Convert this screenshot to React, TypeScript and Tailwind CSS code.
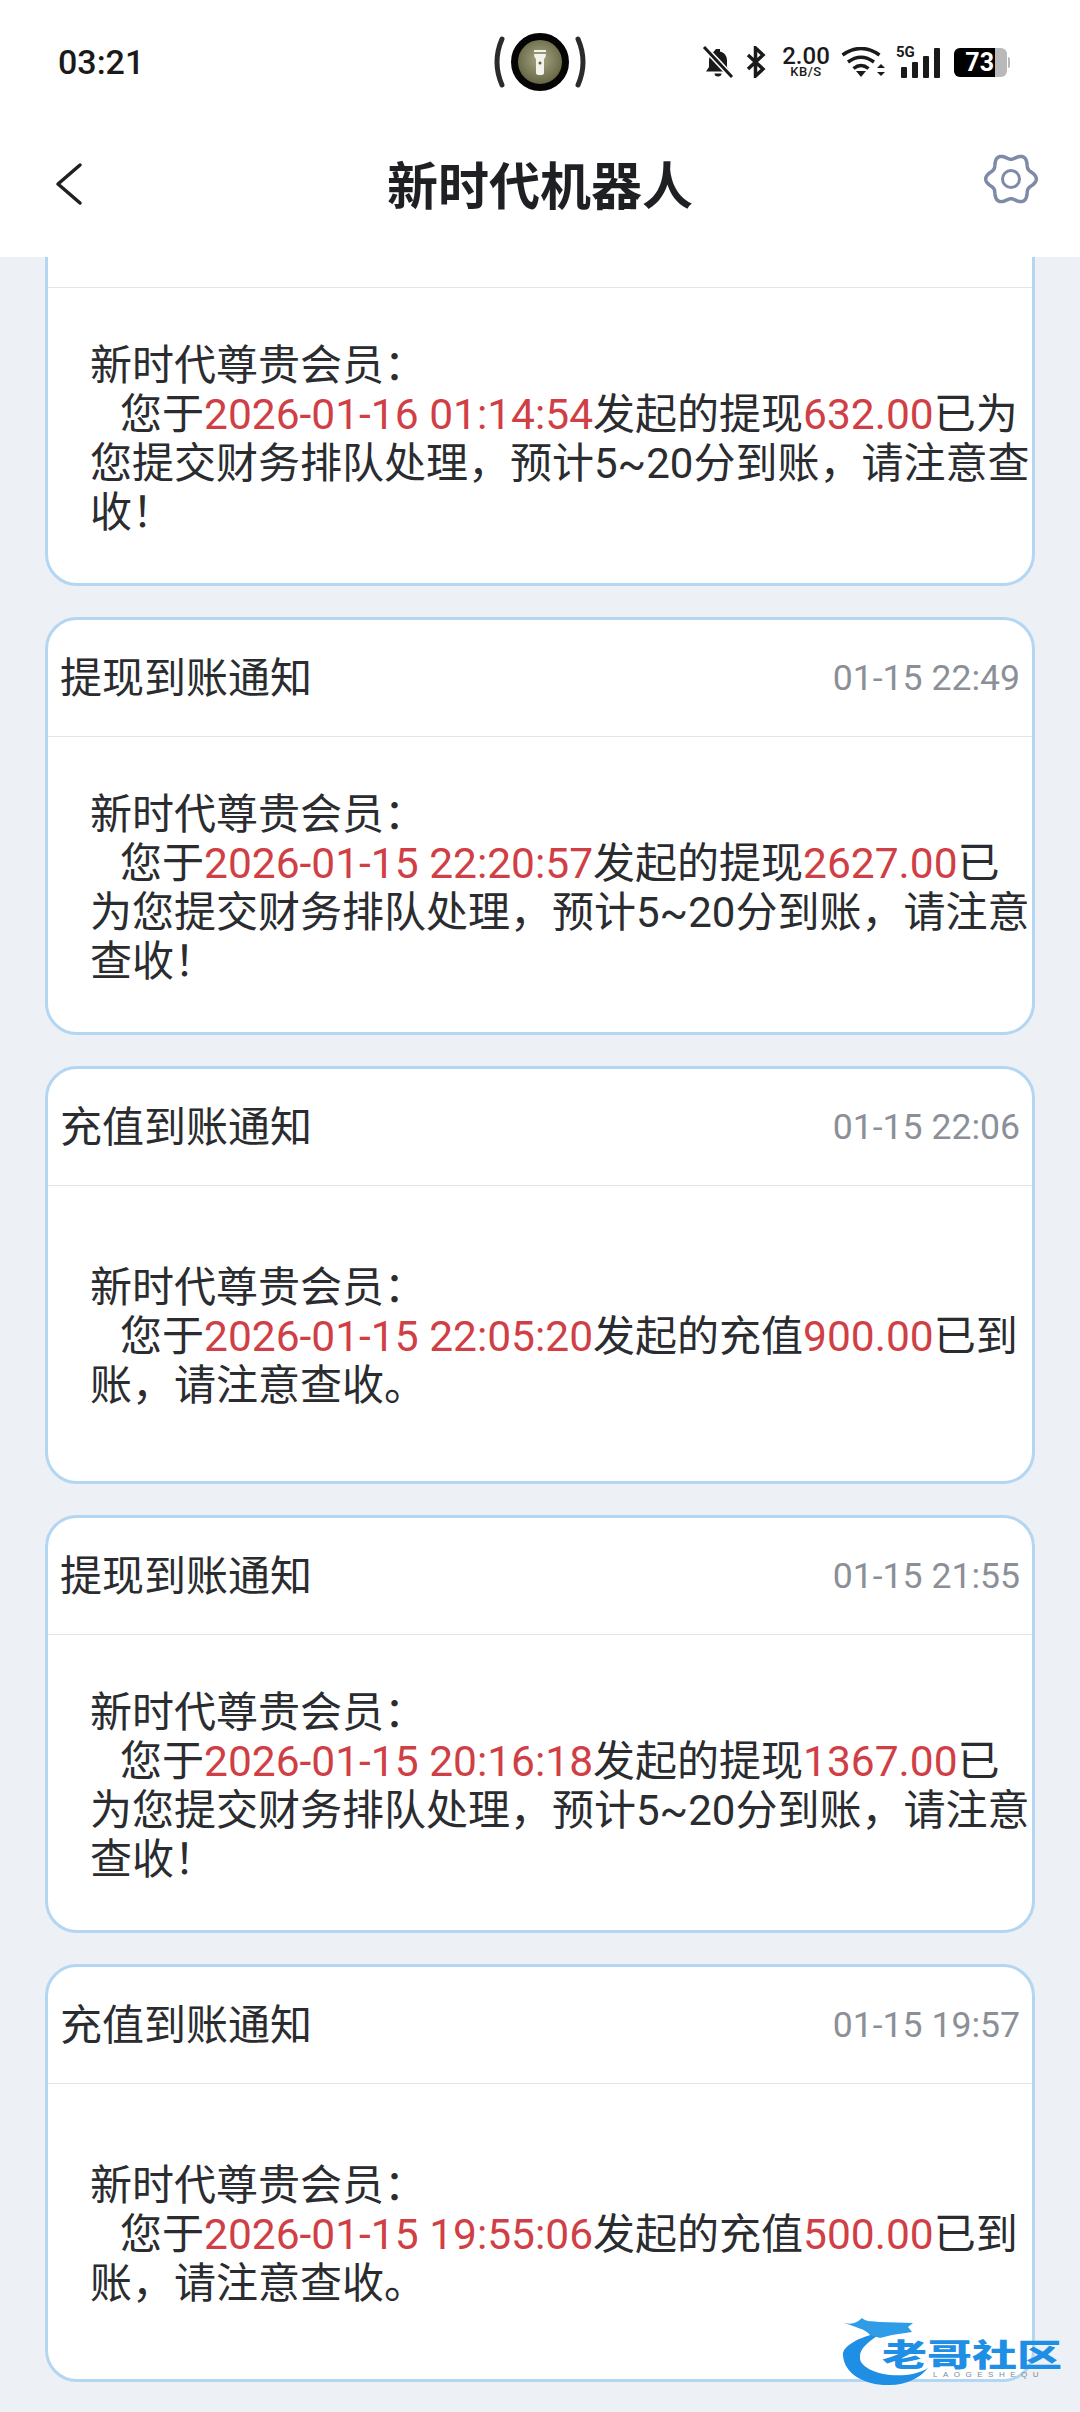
import { ReactNode } from 'react'

const cjk = { fontFamily: 'Roboto, "Noto Sans CJK SC", sans-serif' }

const Red = ({ children }: { children: ReactNode }) => (
  <span className="text-[42.5px] text-[#cf3f45]">{children}</span>
)

type Msg = {
  title: string
  time: string
  at: string
  pre: string
  amount: string
  post: string
}

const messages: Msg[] = [
  // first card is scrolled under the header, its title row can't be seen
  { title: '', time: '', at: '2026-01-16 01:14:54', pre: '发起的提现', amount: '632.00', post: '已为您提交财务排队处理，预计5~20分到账，请注意查收！' },
  { title: '提现到账通知', time: '01-15 22:49', at: '2026-01-15 22:20:57', pre: '发起的提现', amount: '2627.00', post: '已为您提交财务排队处理，预计5~20分到账，请注意查收！' },
  { title: '充值到账通知', time: '01-15 22:06', at: '2026-01-15 22:05:20', pre: '发起的充值', amount: '900.00', post: '已到账，请注意查收。' },
  { title: '提现到账通知', time: '01-15 21:55', at: '2026-01-15 20:16:18', pre: '发起的提现', amount: '1367.00', post: '已为您提交财务排队处理，预计5~20分到账，请注意查收！' },
  { title: '充值到账通知', time: '01-15 19:57', at: '2026-01-15 19:55:06', pre: '发起的充值', amount: '500.00', post: '已到账，请注意查收。' },
]

// six soft teeth, pointing at 0, 60, 120... degrees
const gearPath = () => {
  const pts: string[] = []
  for (let i = 0; i < 120; i++) {
    const a = (i / 120) * Math.PI * 2
    const r = 22.5 + 2.8 * Math.cos(6 * a)
    pts.push(`${(32 + r * Math.cos(a)).toFixed(2)} ${(32 + r * Math.sin(a)).toFixed(2)}`)
  }
  return `M${pts.join('L')}Z`
}

const StatusBar = () => (
  <div className="relative flex h-[124px] items-center justify-between pl-[58px] pr-[70px]">
    <span className="text-[34px] font-medium text-[#1a1a1a]" style={{ fontFamily: 'Roboto, sans-serif' }}>03:21</span>
    {/* flashlight pill */}
    <svg className="absolute left-[490px] top-[28px]" width="100" height="68" viewBox="0 0 100 68">
      <defs>
        <radialGradient id="torch" cx="50%" cy="45%" r="55%">
          <stop offset="0%" stopColor="#a9a886" />
          <stop offset="100%" stopColor="#5d5c3a" />
        </radialGradient>
      </defs>
      <circle cx="50" cy="34" r="25.5" fill="url(#torch)" stroke="#050505" strokeWidth="7" />
      <path d="M12 11Q2 34 12 57M88 11Q98 34 88 57" fill="none" stroke="#2b2b2b" strokeWidth="5" strokeLinecap="round" />
      <path d="M44 22H56V24H44ZM44 26H56Q56 29 54 31V45Q54 47 50 47Q46 47 46 45V31Q44 29 44 26Z" fill="#f4f3ea" />
      <circle cx="50" cy="35" r="1.500" fill="#5d5c3a" />
    </svg>
    <div className="flex items-center">
      {/* muted bell */}
      <svg width="32" height="32" viewBox="0 0 32 32" fill="#1a1a1a">
        <path d="M14 3h4v2.500c4.500 1 7 4.500 7 9V21l3 4.500H4L7 21v-6.500c0-1.800.4-3.400 1.200-4.800Z" />
        <path d="M12.500 27.500h7a3.500 3 0 0 1-7 0Z" />
        <path d="M2 1 30 31" stroke="#fff" strokeWidth="6" />
        <path d="M2 1 30 31" stroke="#1a1a1a" strokeWidth="3" />
      </svg>
      {/* bluetooth */}
      <svg className="ml-[12px]" width="20" height="32" viewBox="0 0 20 32" fill="none" stroke="#1a1a1a" strokeWidth="3.500">
        <path d="M2 9 17 23 9.500 30V2L17 9 2 23" />
      </svg>
      <div className="ml-[14px] flex w-[52px] flex-col items-center font-medium text-[#1a1a1a]" style={{ fontFamily: 'Roboto, sans-serif' }}>
        <span className="h-[17px] text-[24px] leading-[18px]">2.00</span>
        <span className="mt-[1px] h-[13px] text-[13px] leading-[13px] tracking-[0.5px]">KB/S</span>
      </div>
      {/* wifi */}
      <svg className="ml-[9px]" width="44" height="30" viewBox="0 0 44 30" fill="none" stroke="#1a1a1a" strokeWidth="3.500">
        <path d="M1.500 8Q20 -5 38.500 8M7 15Q20 5.500 33 15M12.500 21.500Q20 15.500 27.500 21.500" />
        <path d="M15 24H25L20 30Z" fill="#1a1a1a" stroke="none" />
        <path d="M36 21L40 17L44 21ZM36 25H44L40 29Z" fill="#1a1a1a" stroke="none" />
      </svg>
      {/* 5G and signal */}
      <div className="relative ml-[11px] h-[32px] w-[44px]">
        <span className="absolute left-0 top-[-2px] text-[15px] font-bold leading-[16px] text-[#1a1a1a]" style={{ fontFamily: 'Roboto, sans-serif' }}>5G</span>
        <div className="absolute bottom-0 left-[5px] flex items-end gap-[5px]">
          <div className="h-[11px] w-[6px] rounded-[1px] bg-[#1a1a1a]" />
          <div className="h-[16px] w-[6px] rounded-[1px] bg-[#1a1a1a]" />
          <div className="h-[22px] w-[6px] rounded-[1px] bg-[#1a1a1a]" />
          <div className="h-[30px] w-[6px] rounded-[1px] bg-[#1a1a1a]" />
        </div>
      </div>
      {/* battery */}
      <div className="relative ml-[14px] flex h-[29px] w-[53px] overflow-hidden rounded-[6px] bg-[#b9b9b9]">
        <div className="flex h-full w-[41px] items-center justify-end bg-black pr-[1px]">
          <span className="text-[25px] font-bold leading-none text-white" style={{ fontFamily: 'Roboto, sans-serif' }}>73</span>
        </div>
      </div>
      <div className="ml-[1px] h-[11px] w-[2px] rounded-r-[2px] bg-[#b9b9b9]" />
    </div>
  </div>
)

const NavBar = () => (
  <div className="grid h-[133px] grid-cols-[1fr_auto_1fr] items-center pb-[14px]">
    <div className="pl-[50px]">
      <svg className="block" width="34" height="44" viewBox="0 0 34 44" fill="none" stroke="#1f2024" strokeWidth="3.500" strokeLinecap="round" strokeLinejoin="round">
        <path d="M30 3 8 22 30 41" />
      </svg>
    </div>
    <h1 className="text-[51px] font-bold text-[#1f2024]" style={{ fontFamily: '"Noto Sans CJK SC", sans-serif' }}>新时代机器人</h1>
    <div className="flex justify-end pb-[10px] pr-[37px]">
      <svg className="block" width="64" height="64" viewBox="0 0 64 64" fill="none" stroke="#7d8ba6" strokeWidth="3.500" strokeLinejoin="round">
        <path d={gearPath()} />
        <circle cx="32" cy="32" r="8.500" strokeWidth="3" />
      </svg>
    </div>
  </div>
)

const Card = ({ msg, first }: { msg: Msg; first?: boolean }) => (
  <div className={`${first ? 'mt-[-89px] ' : ''}box-border h-[418px] shrink-0 overflow-hidden rounded-[32px] border-[3px] border-[#b3d6f2] bg-white`}>
    <div className="flex h-[117px] items-center justify-between border-b-[1.500px] border-[#e2e4e7] pl-[12px] pr-[12px] pt-[1px]">
      <span className="text-[42px] leading-[49px] text-[#2a2c30]">{msg.title}</span>
      <span className="text-[35.6px] text-[#8b8f97]">{msg.time}</span>
    </div>
    <div className="flex h-[295px] items-center pl-[42px] pt-[6px]">
      <p className="text-[42px] leading-[49px] text-[#2a2c30]">
        新时代尊贵会员：
        <br />
        <span className="inline-block w-[30px]" />您于<Red>{msg.at}</Red>{msg.pre}<Red>{msg.amount}</Red>{msg.post}
      </p>
    </div>
  </div>
)

const Watermark = () => (
  <div className="absolute left-[842px] top-[2315px] h-[72px] w-[224px]">
    <svg className="absolute left-0 top-0" width="110" height="72" viewBox="0 0 110 72">
      <path d="M41 17C15 22 0 32 1 40C2 60 25 71 48 70C64 70 78 63 86 53C74 60 62 61 48 60C30 58 17 50 18 42C18 34 24 28 41 17Z" fill="#1f8fe6" />
      <path d="M0 7C8 10 14 9 20 3C24 7 30 6 38 7L71 8L66 12L70 17L50 20L38 23L28 20C24 14 12 12 0 7Z" fill="#2f9ce8" />
    </svg>
    <span className="absolute left-[40px] top-[14px] origin-center scale-y-[0.68] whitespace-nowrap text-[45px] font-black leading-[48px] text-[#1f8fe6]" style={{ fontFamily: '"Noto Sans CJK SC", sans-serif' }}>老哥社区</span>
    <span className="absolute left-[91px] top-[55px] whitespace-nowrap text-[8px] leading-[10px] tracking-[5.500px] text-[#7d8896]" style={{ fontFamily: '"Liberation Sans", sans-serif' }}>LAOGESHEQU</span>
  </div>
)

export default function App() {
  return (
    <div className="relative flex h-[2412px] w-[1080px] flex-col overflow-hidden bg-[#edf0f4]" style={cjk}>
      <header className="relative z-10 bg-white">
        <StatusBar />
        <NavBar />
      </header>
      <main className="flex flex-1 flex-col gap-[31px] overflow-hidden px-[45px]">
        {messages.map((m, i) => (
          <Card key={m.at} msg={m} first={i === 0} />
        ))}
      </main>
      <Watermark />
    </div>
  )
}
